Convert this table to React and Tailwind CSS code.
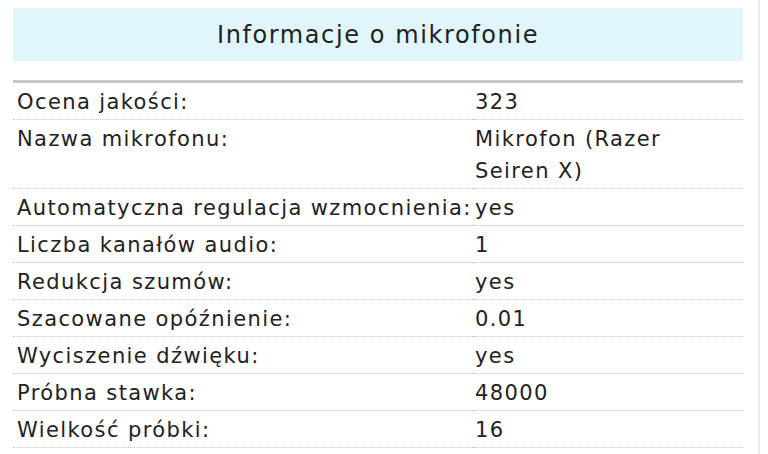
import React from 'react';

const rows = [
  ['Ocena jakości:', '323'],
  ['Nazwa mikrofonu:', 'Mikrofon (Razer Seiren X)'],
  ['Automatyczna regulacja wzmocnienia:', 'yes'],
  ['Liczba kanałów audio:', '1'],
  ['Redukcja szumów:', 'yes'],
  ['Szacowane opóźnienie:', '0.01'],
  ['Wyciszenie dźwięku:', 'yes'],
  ['Próbna stawka:', '48000'],
  ['Wielkość próbki:', '16'],
];

const App = () => {
  return (
    <div className="flex h-[454px] w-[768px] overflow-hidden bg-white font-['DejaVu_Sans',sans-serif] text-[#222]">
      <div className="w-[760px] border-r-2 border-[#e9e9f1] pl-[13px] pr-[15px] pt-[8px]">
        <div className="flex h-[53px] items-center justify-center bg-[#e1f5fd] text-[24px] tracking-[1.6px]">
          Informacje o mikrofonie
        </div>
        <div className="mt-[19px] border-b-[3px] border-[#c8c8c8]" />
        <div className="grid grid-cols-[460px_1fr] text-[21px] leading-[32px] tracking-[1.4px]">
          {rows.map(([label, value]) => (
            <React.Fragment key={label}>
              <div className="whitespace-nowrap border-b border-dotted border-[#c4c4c4] pb-[1px] pl-[4px] pt-[3px]">{label}</div>
              <div className="border-b border-dotted border-[#c4c4c4] pb-[1px] pl-[2px] pr-[60px] pt-[3px]">{value}</div>
            </React.Fragment>
          ))}
        </div>
      </div>
    </div>
  );
};

export default App;
